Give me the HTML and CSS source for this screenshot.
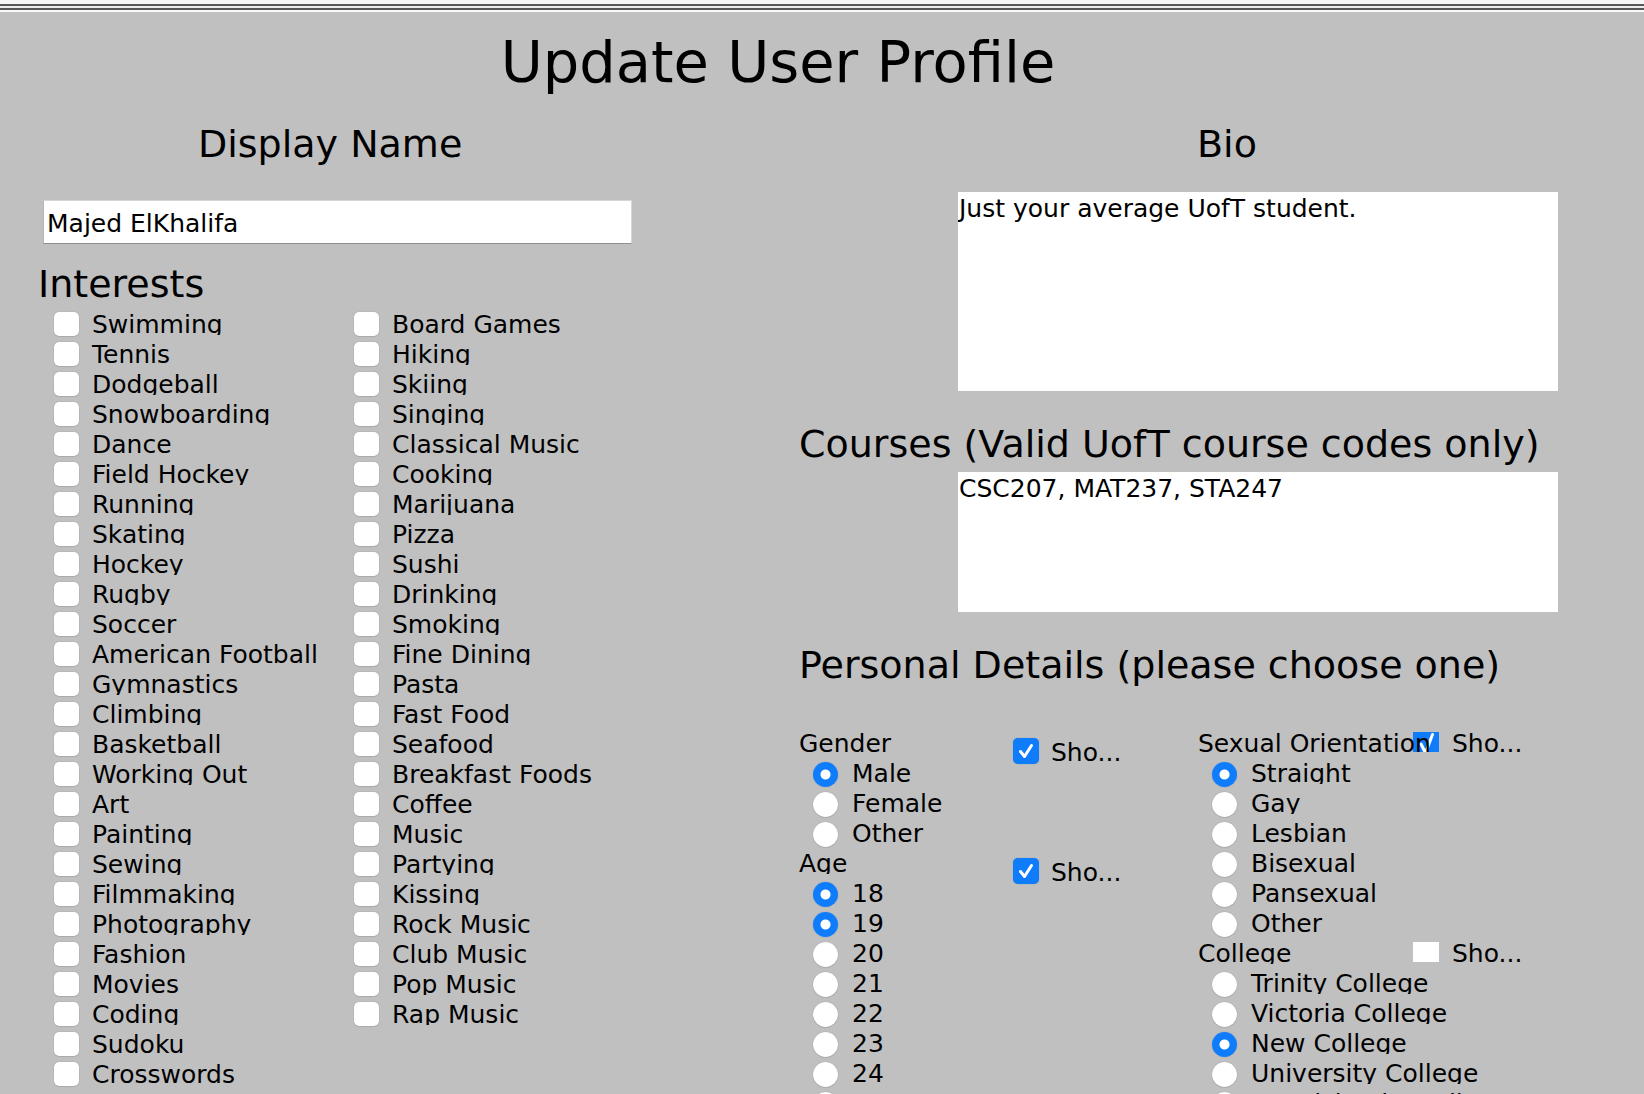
FILE: index.html
```html
<!DOCTYPE html>
<html lang="en">
<head>
<meta charset="utf-8">
<title>Update User Profile</title>
<link rel="stylesheet" href="styles.css">
</head>
<body>
<div class="topbar"></div>
<h1 class="title">Update User Profile</h1>
<div class="main">
  <section class="left">
    <h2 class="heading display-heading">Display Name</h2>
    <input class="name-input" type="text" value="Majed ElKhalifa">
    <h2 class="heading interests-heading">Interests</h2>
    <div class="interests">
      <div class="check"><span class="box"></span><span class="txt">Swimming</span></div>
      <div class="check"><span class="box"></span><span class="txt">Tennis</span></div>
      <div class="check"><span class="box"></span><span class="txt">Dodgeball</span></div>
      <div class="check"><span class="box"></span><span class="txt">Snowboarding</span></div>
      <div class="check"><span class="box"></span><span class="txt">Dance</span></div>
      <div class="check"><span class="box"></span><span class="txt">Field Hockey</span></div>
      <div class="check"><span class="box"></span><span class="txt">Running</span></div>
      <div class="check"><span class="box"></span><span class="txt">Skating</span></div>
      <div class="check"><span class="box"></span><span class="txt">Hockey</span></div>
      <div class="check"><span class="box"></span><span class="txt">Rugby</span></div>
      <div class="check"><span class="box"></span><span class="txt">Soccer</span></div>
      <div class="check"><span class="box"></span><span class="txt">American Football</span></div>
      <div class="check"><span class="box"></span><span class="txt">Gymnastics</span></div>
      <div class="check"><span class="box"></span><span class="txt">Climbing</span></div>
      <div class="check"><span class="box"></span><span class="txt">Basketball</span></div>
      <div class="check"><span class="box"></span><span class="txt">Working Out</span></div>
      <div class="check"><span class="box"></span><span class="txt">Art</span></div>
      <div class="check"><span class="box"></span><span class="txt">Painting</span></div>
      <div class="check"><span class="box"></span><span class="txt">Sewing</span></div>
      <div class="check"><span class="box"></span><span class="txt">Filmmaking</span></div>
      <div class="check"><span class="box"></span><span class="txt">Photography</span></div>
      <div class="check"><span class="box"></span><span class="txt">Fashion</span></div>
      <div class="check"><span class="box"></span><span class="txt">Movies</span></div>
      <div class="check"><span class="box"></span><span class="txt">Coding</span></div>
      <div class="check"><span class="box"></span><span class="txt">Sudoku</span></div>
      <div class="check"><span class="box"></span><span class="txt">Crosswords</span></div>
      <div class="check"><span class="box"></span><span class="txt">Board Games</span></div>
      <div class="check"><span class="box"></span><span class="txt">Hiking</span></div>
      <div class="check"><span class="box"></span><span class="txt">Skiing</span></div>
      <div class="check"><span class="box"></span><span class="txt">Singing</span></div>
      <div class="check"><span class="box"></span><span class="txt">Classical Music</span></div>
      <div class="check"><span class="box"></span><span class="txt">Cooking</span></div>
      <div class="check"><span class="box"></span><span class="txt">Marijuana</span></div>
      <div class="check"><span class="box"></span><span class="txt">Pizza</span></div>
      <div class="check"><span class="box"></span><span class="txt">Sushi</span></div>
      <div class="check"><span class="box"></span><span class="txt">Drinking</span></div>
      <div class="check"><span class="box"></span><span class="txt">Smoking</span></div>
      <div class="check"><span class="box"></span><span class="txt">Fine Dining</span></div>
      <div class="check"><span class="box"></span><span class="txt">Pasta</span></div>
      <div class="check"><span class="box"></span><span class="txt">Fast Food</span></div>
      <div class="check"><span class="box"></span><span class="txt">Seafood</span></div>
      <div class="check"><span class="box"></span><span class="txt">Breakfast Foods</span></div>
      <div class="check"><span class="box"></span><span class="txt">Coffee</span></div>
      <div class="check"><span class="box"></span><span class="txt">Music</span></div>
      <div class="check"><span class="box"></span><span class="txt">Partying</span></div>
      <div class="check"><span class="box"></span><span class="txt">Kissing</span></div>
      <div class="check"><span class="box"></span><span class="txt">Rock Music</span></div>
      <div class="check"><span class="box"></span><span class="txt">Club Music</span></div>
      <div class="check"><span class="box"></span><span class="txt">Pop Music</span></div>
      <div class="check"><span class="box"></span><span class="txt">Rap Music</span></div>
    </div>
  </section>

  <section class="right">
    <h2 class="heading bio-heading">Bio</h2>
    <textarea class="area bio">Just your average UofT student.</textarea>
    <h2 class="heading courses-heading">Courses (Valid UofT course codes only)</h2>
    <textarea class="area courses">CSC207, MAT237, STA247</textarea>
    <h2 class="heading details-heading">Personal Details (please choose one)</h2>

    <div class="details">
      <div class="subcol subcol-a">
        <div class="group group-a">
          <div class="sho sho-a">
            <span class="box box-on"><svg viewBox="0 0 26 26" width="26" height="26"><path d="M7.5 13.5 L11.5 18.5 L18.5 7.5" fill="none" stroke="#fff" stroke-width="3" stroke-linecap="round" stroke-linejoin="round"/></svg></span>
            <span class="txt">Sho...</span>
          </div>
          <div class="group-main">
            <div class="glabel"><span class="txt">Gender</span></div>
            <div class="radio"><span class="dot dot-on"></span><span class="txt">Male</span></div>
            <div class="radio"><span class="dot"></span><span class="txt">Female</span></div>
            <div class="radio"><span class="dot"></span><span class="txt">Other</span></div>
          </div>
        </div>
        <div class="group group-a">
          <div class="sho sho-a">
            <span class="box box-on"><svg viewBox="0 0 26 26" width="26" height="26"><path d="M7.5 13.5 L11.5 18.5 L18.5 7.5" fill="none" stroke="#fff" stroke-width="3" stroke-linecap="round" stroke-linejoin="round"/></svg></span>
            <span class="txt">Sho...</span>
          </div>
          <div class="group-main">
            <div class="glabel"><span class="txt">Age</span></div>
            <div class="radio"><span class="dot dot-on"></span><span class="txt">18</span></div>
            <div class="radio"><span class="dot dot-on"></span><span class="txt">19</span></div>
            <div class="radio"><span class="dot"></span><span class="txt">20</span></div>
            <div class="radio"><span class="dot"></span><span class="txt">21</span></div>
            <div class="radio"><span class="dot"></span><span class="txt">22</span></div>
            <div class="radio"><span class="dot"></span><span class="txt">23</span></div>
            <div class="radio"><span class="dot"></span><span class="txt">24</span></div>
            <div class="radio"><span class="dot"></span><span class="txt">25</span></div>
          </div>
        </div>
      </div>

      <div class="subcol subcol-b">
        <div class="group group-b">
          <div class="sho sho-b">
            <span class="box box-flat box-on"><svg viewBox="0 0 26 20" width="26" height="20"><path d="M8 12 L12.5 21 L19.5 2.5" fill="none" stroke="#fff" stroke-width="3" stroke-linecap="round" stroke-linejoin="round"/></svg></span>
            <span class="txt">Sho...</span>
          </div>
          <div class="group-main">
            <div class="glabel"><span class="txt">Sexual Orientation</span></div>
            <div class="radio"><span class="dot dot-on"></span><span class="txt">Straight</span></div>
            <div class="radio"><span class="dot"></span><span class="txt">Gay</span></div>
            <div class="radio"><span class="dot"></span><span class="txt">Lesbian</span></div>
            <div class="radio"><span class="dot"></span><span class="txt">Bisexual</span></div>
            <div class="radio"><span class="dot"></span><span class="txt">Pansexual</span></div>
            <div class="radio"><span class="dot"></span><span class="txt">Other</span></div>
          </div>
        </div>
        <div class="group group-b">
          <div class="sho sho-b">
            <span class="box box-flat"></span>
            <span class="txt">Sho...</span>
          </div>
          <div class="group-main">
            <div class="glabel"><span class="txt">College</span></div>
            <div class="radio"><span class="dot"></span><span class="txt">Trinity College</span></div>
            <div class="radio"><span class="dot"></span><span class="txt">Victoria College</span></div>
            <div class="radio"><span class="dot dot-on"></span><span class="txt">New College</span></div>
            <div class="radio"><span class="dot"></span><span class="txt">University College</span></div>
            <div class="radio"><span class="dot"></span><span class="txt">St. Michael's College</span></div>
          </div>
        </div>
      </div>
    </div>
  </section>
</div>
</body>
</html>
```

FILE: styles.css
```css
html, body {
  margin: 0;
  height: 1094px;
  overflow: hidden;
}

body {
  background: #c0c0c0;
  color: #000;
  font-family: "DejaVu Sans", "Noto Sans", sans-serif;
}

.topbar {
  height: 12px;
  background: linear-gradient(to bottom,
    #f6f6f6 0, #f6f6f6 4px,
    #575757 4px, #575757 6px,
    #ececec 6px, #ececec 8px,
    #575757 8px, #575757 10px,
    #f8f8f8 10px, #f8f8f8 12px);
}

.title {
  margin: 16px 0 0;
  padding-right: 88px;
  font-size: 57.5px;
  font-weight: normal;
  line-height: 70px;
  text-align: center;
  white-space: nowrap;
}

.main {
  display: flex;
}

.left {
  flex: none;
  width: 799px;
  padding-left: 38px;
  box-sizing: border-box;
}

.right {
  flex: 1;
}

.heading {
  margin: 0;
  font-size: 38px;
  font-weight: normal;
  line-height: 46px;
  white-space: nowrap;
}

.display-heading {
  margin-top: 23px;
  padding-left: 160px;
}

.name-input {
  display: block;
  margin: 33px 0 0 5px;
  width: 589px;
  height: 44px;
  box-sizing: border-box;
  padding: 2px 0 0 3px;
  border: 1px solid #d6d6d6;
  border-bottom-color: #8e8e8e;
  border-left-color: #b5b5b5;
  background: #fff;
  font-family: inherit;
  font-size: 25px;
  color: #000;
  outline: none;
}

.interests-heading {
  margin-top: 17px;
}

.interests {
  display: grid;
  grid-template-columns: 300px 300px;
  grid-template-rows: repeat(26, 30px);
  grid-auto-flow: column;
  margin: 3px 0 0 16px;
}

.check {
  display: flex;
  align-items: flex-start;
  height: 30px;
}

.box {
  flex: none;
  display: block;
  width: 25px;
  height: 24px;
  margin-top: 2px;
  margin-right: 13px;
  border-radius: 5px;
  background: #fff;
  box-shadow: 0 0 1px rgba(0, 0, 0, 0.35), 0 1px 1px rgba(0, 0, 0, 0.08);
  overflow: hidden;
}

.box svg {
  display: block;
}

.txt {
  display: block;
  height: 25px;
  font-size: 25px;
  line-height: 29px;
  white-space: nowrap;
  overflow-x: visible;
  overflow-y: clip;
}

.bio-heading {
  margin-top: 23px;
  padding-left: 398px;
}

.area {
  display: block;
  margin-left: 159px;
  width: 600px;
  box-sizing: border-box;
  padding: 2px 0 0 1px;
  border: none;
  outline: none;
  resize: none;
  overflow: hidden;
  background: #fff;
  color: #000;
  font-family: inherit;
  font-size: 25px;
  line-height: 30px;
}

.bio {
  margin-top: 25px;
  height: 199px;
}

.courses-heading {
  margin-top: 30px;
}

.courses {
  margin-top: 5px;
  height: 140px;
}

.details-heading {
  margin-top: 30px;
}

.details {
  display: flex;
  margin-top: 41px;
}

.subcol-a {
  flex: none;
  width: 399px;
}

.subcol-b {
  flex: 1;
}

.group {
  display: grid;
  align-items: start;
}

.group-a {
  grid-template-columns: 214px auto;
}

.group-b {
  grid-template-columns: 215px auto;
}

.group-main {
  grid-column: 1;
  grid-row: 1;
}

.sho {
  grid-column: 2;
  grid-row: 1;
  display: flex;
  align-items: flex-start;
}

.sho-a {
  margin-top: 9px;
}

.sho-a .box {
  width: 26px;
  height: 26px;
  margin-top: 0;
  margin-right: 12px;
}

.sho-b .box {
  width: 26px;
  height: 20px;
  margin-top: 3px;
  margin-right: 13px;
}

.box-on {
  background: #0f7cfc;
  box-shadow: 0 0 1px rgba(0, 60, 160, 0.5);
}

.box-flat {
  border-radius: 0;
  box-shadow: none;
}

.glabel {
  height: 30px;
}

.radio {
  display: flex;
  align-items: flex-start;
  height: 30px;
  padding-left: 14px;
}

.dot {
  flex: none;
  display: block;
  width: 25px;
  height: 25px;
  margin-top: 3px;
  margin-right: 14px;
  border-radius: 50%;
  background: #fff;
  box-shadow: 0 0 1px rgba(0, 0, 0, 0.3), 0 1px 1px rgba(0, 0, 0, 0.08);
}

.dot-on {
  background: radial-gradient(circle at center, #fff 0, #fff 4.5px, #0f7cfc 5.5px);
  box-shadow: 0 0 1px rgba(0, 60, 160, 0.5);
}
```
